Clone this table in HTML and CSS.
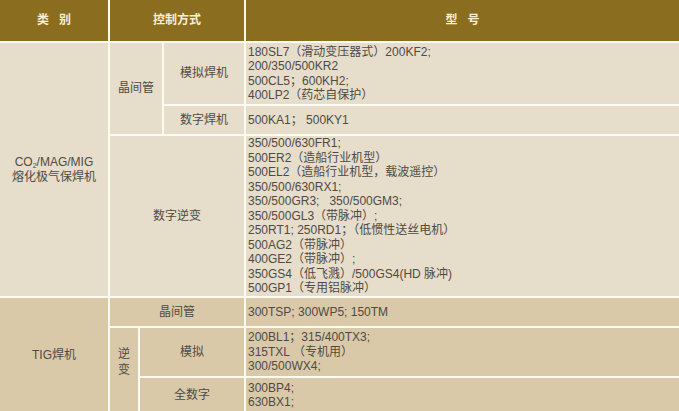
FILE: index.html
```html
<!DOCTYPE html>
<html lang="zh-CN">
<head>
<meta charset="utf-8">
<title>焊机型号</title>
<link rel="stylesheet" href="styles.css">
</head>
<body>
<div class="table">
  <div class="cell head c1"><span>类&nbsp;&nbsp;&nbsp;别</span></div>
  <div class="cell head c234"><span>控制方式</span></div>
  <div class="cell head c5"><span>型&nbsp;&nbsp;&nbsp;号</span></div>

  <div class="cell mig center c1 r-co2"><p class="txt">CO<sub>2</sub>/MAG/MIG<br>熔化极气保焊机</p></div>
  <div class="cell mig center c23 r-jz"><p class="txt">晶间管</p></div>
  <div class="cell mig center c4"><p class="txt">模拟焊机</p></div>
  <div class="cell mig list c5"><p class="txt">180SL7（滑动变压器式）200KF2;<br>200/350/500KR2<br>500CL5；600KH2;<br>400LP2（药芯自保护）</p></div>

  <div class="cell mig center c4"><p class="txt">数字焊机</p></div>
  <div class="cell mig list c5"><p class="txt">500KA1； 500KY1</p></div>

  <div class="cell mig center c234"><p class="txt">数字逆变</p></div>
  <div class="cell mig list c5"><p class="txt">350/500/630FR1;<br>500ER2（造船行业机型）<br>500EL2（造船行业机型，载波遥控）<br>350/500/630RX1;<br>350/500GR3;&nbsp;&nbsp; 350/500GM3;<br>350/500GL3（带脉冲）;<br>250RT1; 250RD1；（低惯性送丝电机）<br>500AG2（带脉冲）<br>400GE2（带脉冲）;<br>350GS4（低飞溅）/500GS4(HD 脉冲)<br>500GP1（专用铝脉冲）</p></div>

  <div class="cell tig center c1 r-tig"><p class="txt">TIG焊机</p></div>
  <div class="cell tig center c234"><p class="txt">晶间管</p></div>
  <div class="cell tig list c5"><p class="txt">300TSP; 300WP5; 150TM</p></div>

  <div class="cell tig center c2 r-nb nb"><p class="txt">逆<br>变</p></div>
  <div class="cell tig center c34"><p class="txt">模拟</p></div>
  <div class="cell tig list c5"><p class="txt">200BL1；315/400TX3;<br>315TXL （专机用）<br>300/500WX4;</p></div>

  <div class="cell tig center c34"><p class="txt">全数字</p></div>
  <div class="cell tig list c5"><p class="txt">300BP4;<br>630BX1;</p></div>
</div>
</body>
</html>
```
FILE: styles.css
```css
html, body {
  margin: 0;
  padding: 0;
  height: 411px;
  overflow: hidden;
  background: #fcfaf1;
}
.table {
  display: grid;
  grid-template-columns: 108px 28px 22px 80px 1fr;
  grid-template-rows: 41px 61px 28px 160px 28px 48px 34px;
  gap: 2px;
  background: #fcfaf1;
  width: 679px;
  font-family: "Liberation Sans", "Noto Sans CJK SC", sans-serif;
  font-size: 12px;
  line-height: 14.5px;
  color: #4f4b44;
}
.cell {
  display: flex;
  align-items: center;
}
.txt {
  margin: 0;
}
.head {
  background: #8a6d1f;
  color: #f6efd6;
  font-weight: bold;
  justify-content: center;
  font-size: 12px;
}
.mig { background: #e6ddcb; }
.tig { background: #d9c9a9; }
.center {
  justify-content: center;
  text-align: center;
}
.list {
  padding-left: 2px;
}
.c1 { grid-column: 1; }
.c2 { grid-column: 2; }
.c23 { grid-column: 2 / 4; }
.c234 { grid-column: 2 / 5; }
.c34 { grid-column: 3 / 5; }
.c4 { grid-column: 4; }
.c5 { grid-column: 5; }
.r-co2 { grid-row: 2 / 5; }
.r-jz { grid-row: 2 / 4; }
.r-tig { grid-row: 5 / 8; }
.r-nb { grid-row: 6 / 8; }
.nb {
  padding-bottom: 16px;
  line-height: 16px;
}
sub {
  font-size: 7px;
  line-height: 0;
  vertical-align: -2px;
}
```
